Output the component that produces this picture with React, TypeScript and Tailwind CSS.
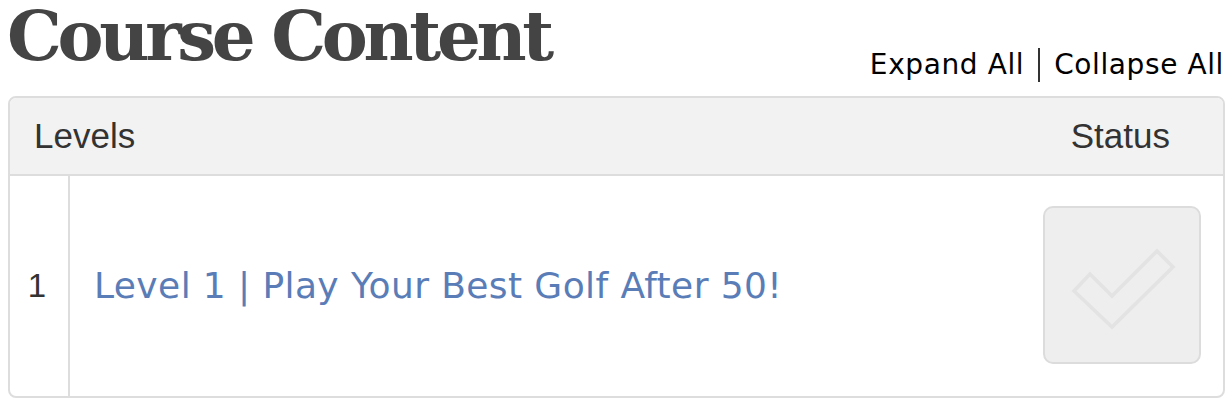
import React from "react";

export default function App() {
  return (
    <div className="w-[1228px] h-[402px] bg-white overflow-hidden">
      <div className="flex justify-between h-[96px] pl-[7px] pr-[4px]">
        <h1
          className="text-[69px] leading-[72px] font-bold text-[#444444] tracking-[-4.3px] self-start whitespace-nowrap"
          style={{ fontFamily: '"DejaVu Serif", serif' }}
        >
          Course Content
        </h1>
        <div
          className="self-end mb-[14px] text-[28px] leading-[32px] text-black flex items-center tracking-[0.6px]"
          style={{ fontFamily: '"DejaVu Sans", Verdana, sans-serif' }}
        >
          <span>Expand All</span>
          <span className="mx-[14px] inline-block w-[2px] h-[34px] bg-[#333]" />
          <span>Collapse All</span>
        </div>
      </div>
      <div className="ml-[8px] mr-[3px] border-2 border-[#dddddd] rounded-[8px] overflow-hidden">
        <div
          className="flex items-center justify-between h-[78px] bg-[#f2f2f2] border-b-2 border-[#dddddd] pl-[24px] pr-[53px] text-[35px] text-[#333333]"
          style={{ fontFamily: '"Liberation Sans", Arial, sans-serif' }}
        >
          <span>Levels</span>
          <span>Status</span>
        </div>
        <div className="flex h-[220px]">
          <div
            className="w-[60px] border-r-2 border-[#dddddd] flex items-center justify-center pr-[4px] text-[33px] text-[#333333]"
            style={{ fontFamily: '"Liberation Sans", Arial, sans-serif' }}
          >
            1
          </div>
          <div className="flex-1 flex items-center justify-between pl-[24px] pr-[22px]">
            <a
              className="text-[36px] text-[#5a7db7] tracking-[0.4px]"
              style={{ fontFamily: '"DejaVu Sans", Verdana, sans-serif' }}
            >
              Level 1 | Play Your Best Golf After 50!
            </a>
            <div className="w-[158px] h-[158px] mb-[2px] bg-[#eeeeee] border-2 border-[#dcdcdc] rounded-[10px]">
              <svg width="154" height="154" viewBox="0 0 154 154">
                <path
                  d="M29 83 L45 66 L67 88 L112 43 L128 59 L67 119 Z"
                  fill="none"
                  stroke="#e3e3e3"
                  strokeWidth="3.5"
                  strokeLinejoin="miter"
                />
              </svg>
            </div>
          </div>
        </div>
      </div>
    </div>
  );
}
